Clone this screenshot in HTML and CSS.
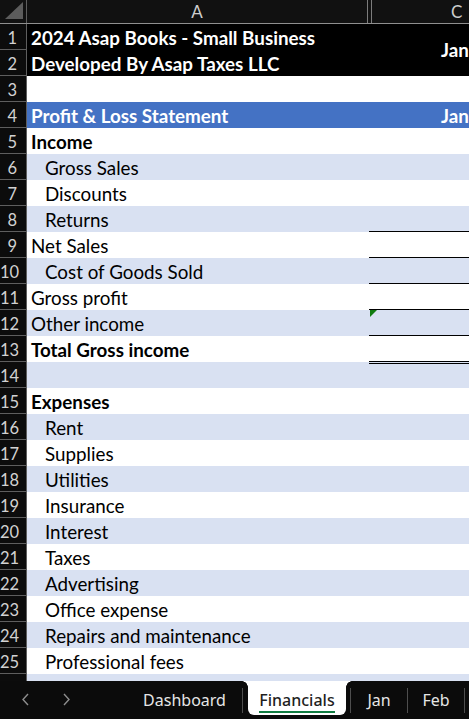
FILE: index.html
```html
<!DOCTYPE html>
<html>
<head>
<meta charset="utf-8">
<link rel="stylesheet" href="styles.css">
</head>
<body>
<div class="app">
  <div class="colhdr">
    <div class="corner"><span class="tri"></span></div>
    <div class="ch ch-a">A</div>
    <div class="ch ch-b"></div>
    <div class="ch ch-c">C</div>
  </div>
  <div class="grid">
    <div class="rn">1</div><div class="a dark">2024 Asap Books - Small Business</div><div class="c dark jan1">Jan</div>
    <div class="rn">2</div><div class="a dark">Developed By Asap Taxes LLC</div>
    <div class="rn">3</div><div class="a"></div><div class="c"></div>
    <div class="rn">4</div><div class="a hdr">Profit &amp; Loss Statement</div><div class="c hdr jan">Jan</div>
    <div class="rn">5</div><div class="a b">Income</div><div class="c"></div>
    <div class="rn">6</div><div class="a band ind">Gross Sales</div><div class="c band"></div>
    <div class="rn">7</div><div class="a ind">Discounts</div><div class="c"></div>
    <div class="rn">8</div><div class="a band ind">Returns</div><div class="c band ul"></div>
    <div class="rn">9</div><div class="a">Net Sales</div><div class="c ul"></div>
    <div class="rn">10</div><div class="a band ind">Cost of Goods Sold</div><div class="c band ul"></div>
    <div class="rn">11</div><div class="a">Gross profit</div><div class="c ul"></div>
    <div class="rn">12</div><div class="a band">Other income</div><div class="c band ul flag"></div>
    <div class="rn">13</div><div class="a b">Total Gross income</div><div class="c ul"></div>
    <div class="rn">14</div><div class="a band"></div><div class="c band dbl"></div>
    <div class="rn">15</div><div class="a b">Expenses</div><div class="c"></div>
    <div class="rn">16</div><div class="a band ind">Rent</div><div class="c band"></div>
    <div class="rn">17</div><div class="a ind">Supplies</div><div class="c"></div>
    <div class="rn">18</div><div class="a band ind">Utilities</div><div class="c band"></div>
    <div class="rn">19</div><div class="a ind">Insurance</div><div class="c"></div>
    <div class="rn">20</div><div class="a band ind">Interest</div><div class="c band"></div>
    <div class="rn">21</div><div class="a ind">Taxes</div><div class="c"></div>
    <div class="rn">22</div><div class="a band ind">Advertising</div><div class="c band"></div>
    <div class="rn">23</div><div class="a ind">Office expense</div><div class="c"></div>
    <div class="rn">24</div><div class="a band ind">Repairs and maintenance</div><div class="c band"></div>
    <div class="rn">25</div><div class="a ind">Professional fees</div><div class="c"></div>
    <div class="rn rn-last"></div><div class="a band"></div><div class="c band"></div>
  </div>
  <div class="tabbar">
    <div class="nav">
      <svg class="arrow" width="9" height="13" viewBox="0 0 9 13"><path d="M7 1 L2 6.5 L7 12" fill="none" stroke="#8e8e8e" stroke-width="1.4"/></svg>
      <svg class="arrow" width="9" height="13" viewBox="0 0 9 13"><path d="M2 1 L7 6.5 L2 12" fill="none" stroke="#8e8e8e" stroke-width="1.4"/></svg>
    </div>
    <div class="tab t-dash">Dashboard</div>
    <div class="sep"></div>
    <div class="tab active"><span class="lbl">Financials</span></div>
    <div class="sep"></div>
    <div class="tab t-jan">Jan</div>
    <div class="sep"></div>
    <div class="tab t-feb">Feb</div>
    <div class="sep"></div>
  </div>
</div>
</body>
</html>
```
FILE: styles.css
```css
* { box-sizing: border-box; }
html, body { margin: 0; padding: 0; }
body {
  width: 469px;
  height: 719px;
  overflow: hidden;
  background: #0b0b0b;
  font-family: Lato, "Liberation Sans", sans-serif;
}
.app { width: 469px; height: 719px; overflow: hidden; display: flex; flex-direction: column; }

.colhdr {
  display: flex;
  height: 24px;
  flex: none;
  background: #111111;
  border-bottom: 1px solid #8f8f8f;
}
.corner {
  width: 27px;
  flex: none;
  border-right: 1px solid #5e5e5e;
  position: relative;
}
.tri {
  position: absolute;
  left: 5px;
  top: 2px;
  width: 18px;
  height: 17px;
  background: #5c5c5c;
  clip-path: polygon(100% 0, 100% 100%, 0 100%);
}
.ch {
  color: #cdcdcd;
  font-size: 17px;
  line-height: 23px;
  flex: none;
}
.ch-a { width: 341px; text-align: center; border-right: 1px solid #7c7c7c; }
.ch-b { width: 4px; border-right: 1px solid #7c7c7c; }
.ch-c { flex: 1; padding-left: 79px; }

.grid {
  display: grid;
  grid-template-columns: 27px 342px 100px;
  grid-auto-rows: 26px;
  height: 657px;
  overflow: hidden;
  flex: none;
  background: #fff;
}
.rn {
  background: #0c0c0c;
  color: #d2d2d2;
  border-right: 1px solid #5e5e5e;
  border-bottom: 1px solid #5e5e5e;
  font-size: 16.5px;
  line-height: 20px;
  padding-top: 4px;
  padding-right: 9px;
  text-align: right;
  white-space: nowrap;
}
.a, .c {
  font-size: 18.8px;
  line-height: 20px;
  padding-top: 4px;
  color: #000;
  white-space: nowrap;
  background: #fff;
}
.a { padding-left: 4px; }
.ind { padding-left: 18px; }
.b { font-weight: bold; }
.band { background: #d9e1f2; }
.dark { background: #000; color: #fff; font-weight: bold; }
.hdr { background: #4472c4; color: #fff; font-weight: bold; }
.jan { padding-left: 72px; }
.jan1 {
  grid-row: span 2;
  padding-left: 72px;
  display: flex;
  align-items: center;
  padding-top: 0;
}
.ul { border-bottom: 1px solid #000; }
.dbl {
  background-image: linear-gradient(to bottom, transparent 0, transparent 1px, #000 1px, #000 2px, transparent 2px);
}
.flag { position: relative; }
.flag::before {
  content: "";
  position: absolute;
  left: 1px;
  top: 0;
  width: 7px;
  height: 7px;
  background: #107c10;
  clip-path: polygon(0 0, 100% 0, 0 100%);
}

.tabbar {
  flex: 1;
  display: flex;
  align-items: flex-start;
  background: #0b0b0b;
  font-family: "Noto Sans", "Open Sans", sans-serif;
  font-size: 16px;
}
.nav {
  width: 127px;
  height: 38px;
  flex: none;
  display: flex;
  align-items: center;
  padding-left: 21px;
  gap: 32px;
  padding-bottom: 2px;
}
.arrow { display: block; }
.tab {
  height: 38px;
  line-height: 38px;
  text-align: center;
  color: #e6e6e6;
  flex: none;
}
.t-dash { width: 115px; }
.t-jan { width: 56px; }
.t-feb { width: 56px; }
.sep {
  width: 1px;
  height: 25px;
  margin-top: 7px;
  background: #4e4e4e;
  flex: none;
}
.active {
  width: 98px;
  height: 34px;
  margin: 0 4px 0 5px;
  background: #fff;
  color: #1f1f1f;
  font-weight: 500;
  border-radius: 0 0 6px 6px;
  position: relative;
}
.active::before, .active::after {
  content: "";
  position: absolute;
  top: 0;
  width: 6px;
  height: 6px;
}
.active::before {
  left: -6px;
  background: radial-gradient(circle at 0 100%, transparent 5.5px, #fff 6px);
}
.active::after {
  right: -6px;
  background: radial-gradient(circle at 100% 100%, transparent 5.5px, #fff 6px);
}
.lbl {
  display: inline-block;
  line-height: 22px;
  margin-top: 7px;
  border-bottom: 2px solid #107c41;
}
```
